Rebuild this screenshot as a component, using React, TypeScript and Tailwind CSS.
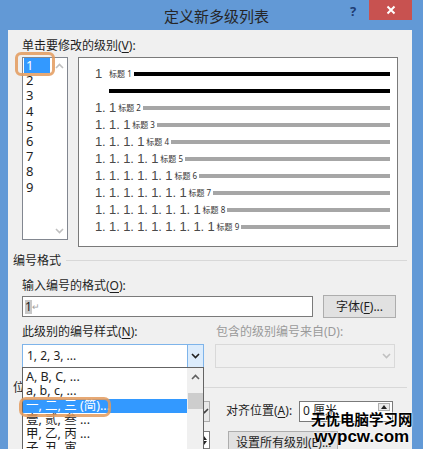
import type { ReactNode } from "react"

const levels = [1, 2, 3, 4, 5, 6, 7, 8, 9]

const styles = [
  "A, B, C, ...",
  "a, b, c, ...",
  "一, 二, 三 (简)...",
  "壹, 贰, 叁 ...",
  "甲, 乙, 丙 ...",
  "子, 丑, 寅 ...",
]

function Chevron({ up, color = "#606060" }: { up?: boolean; color?: string }) {
  return (
    <svg width="9" height="6" viewBox="0 0 9 6">
      <polyline
        points={up ? "1,5 4.5,1.5 8,5" : "1,1 4.5,4.5 8,1"}
        fill="none"
        stroke={color}
        strokeWidth="1.6"
      />
    </svg>
  )
}

function Key({ children }: { children: ReactNode }) {
  return <span className="underline underline-offset-2">{children}</span>
}

function PreviewRow({ level }: { level: number }) {
  const num = Array.from({ length: level }, () => "1").join(". ")
  return (
    <div className="flex h-[17px] items-center">
      <span className="text-[13px] leading-none tracking-[-0.01em] text-[#4a4a4a] font-['Liberation_Sans',sans-serif]">
        {num}
      </span>
      <span className={`${level === 1 ? "ml-[7px]" : "ml-[2px]"} text-[8px] leading-none text-[#333] whitespace-nowrap`}>
        标题 {level}
      </span>
      <div className={`ml-[2px] h-[4px] flex-1 ${level === 1 ? "bg-black" : "bg-[#a6a6a6]"}`} />
    </div>
  )
}

export default function App() {
  return (
    <div className="relative flex h-[449px] w-[423px] flex-col overflow-hidden bg-[#6299d6] text-[12px] text-[#1e1e1e] font-['Noto_Sans','Noto_Sans_CJK_SC',sans-serif]">
      {/* title bar */}
      <div className="relative flex h-[30px] shrink-0 items-center justify-center">
        <span className="pl-[10px] text-[15px] leading-none text-[#262626] font-['Noto_Sans_CJK_SC',sans-serif]">
          定义新多级列表
        </span>
        <span className="absolute left-[350px] top-[2px] text-[13px] font-bold text-[#1f3d73]">?</span>
        <div className="absolute left-[369px] top-0 flex h-[20px] w-[43px] items-center justify-center bg-[#c85250]">
          <svg width="10" height="10" viewBox="0 0 10 10">
            <path d="M1.5 1.5 L8.5 8.5 M8.5 1.5 L1.5 8.5" stroke="#fff" strokeWidth="2" />
          </svg>
        </div>
      </div>

      {/* dialog body */}
      <div className="relative ml-[8px] mr-[11px] flex-1 bg-[#f0f0f0]">
        <div className="pl-[14px] pt-[8px] leading-[15px]">
          单击要修改的级别(<Key>V</Key>):
        </div>

        <div className="mt-[4px] flex items-start gap-[10px] pl-[14px]">
          {/* level list */}
          <div className="flex h-[183px] w-[46px] border border-[#828790] bg-white">
            <div className="w-[28px]">
              {levels.map((n) => (
                <div
                  key={n}
                  className={`mx-[1px] h-[15.2px] pl-[2px] text-[13px] leading-[15px] ${
                    n === 1 ? "bg-[#3399ff] text-white" : "text-[#1e1e1e]"
                  }`}
                >
                  {n}
                </div>
              ))}
            </div>
            <div className="flex w-[16px] flex-col items-center justify-between py-[5px]">
              <Chevron up color="#c0c0c0" />
              <Chevron color="#c0c0c0" />
            </div>
          </div>

          {/* preview */}
          <div className="h-[190px] w-[320px] border border-[#7a7a7a] bg-white pl-[16px] pr-[7px] pt-[7px]">
            <PreviewRow level={1} />
            <div className="flex h-[17px] items-center pl-[14px]">
              <div className="h-[4px] flex-1 bg-black" />
            </div>
            {levels.slice(1).map((n) => (
              <PreviewRow key={n} level={n} />
            ))}
          </div>
        </div>

        {/* number format group */}
        <div className="mt-[6px] flex items-center pl-[5px] leading-[15px]">
          <span>编号格式</span>
          <div className="ml-[5px] mr-[5px] h-px flex-1 bg-[#d8d8d8]" />
        </div>

        <div className="mt-[10px] pl-[14px] leading-[15px]">
          输入编号的格式(<Key>O</Key>):
        </div>

        <div className="mt-[2px] flex h-[23px] items-center pl-[14px]">
          <div className="flex h-[21px] w-[291px] items-center border border-[#7a7a7a] bg-white pl-[2px]">
            <span className="bg-[#c8c8c8] text-[12px] leading-[14px]">1</span>
            <span className="text-[9px] leading-none text-[#a0a0a0]">↵</span>
          </div>
          <button className="ml-[10px] h-[23px] w-[73px] border border-[#adadad] bg-[#e1e1e1] text-[12px] leading-none">
            字体(<Key>F</Key>)...
          </button>
        </div>

        <div className="mt-[6px] flex leading-[15px]">
          <span className="w-[208px] pl-[14px]">
            此级别的编号样式(<Key>N</Key>):
          </span>
          <span className="text-[#9a9a9a]">包含的级别编号来自(D):</span>
        </div>

        <div className="mt-[5px] flex items-center pl-[14px]">
          <div className="flex h-[24px] w-[182px] items-center justify-between border border-[#7eb4ea] bg-white">
            <span className="pl-[4px] leading-none">1, 2, 3, ...</span>
            <div className="flex h-full w-[16px] items-center justify-center border-l border-[#7eb4ea] bg-[#dcecfc]">
              <Chevron color="#202020" />
            </div>
          </div>
          <div className="ml-[11px] flex h-[24px] w-[180px] items-center justify-end border border-[#d9d9d9] bg-[#f0f0f0]">
            <div className="flex h-full w-[16px] items-center justify-center">
              <Chevron color="#c0c0c0" />
            </div>
          </div>
        </div>

        {/* position group */}
        <div className="mt-[12px] flex items-center pl-[5px] leading-[15px]">
          <span>位置</span>
          <div className="ml-[5px] mr-[5px] h-px flex-1 bg-[#d8d8d8]" />
        </div>

        <div className="mt-[5px] flex h-[22px] items-center pl-[14px]">
          <div className="flex h-[21px] w-[188px] items-center justify-end border border-[#adadad] bg-[#e8e8e8]">
            <div className="flex w-[10px] justify-center">
              <Chevron color="#404040" />
            </div>
          </div>
          <span className="ml-[16px] leading-none">
            对齐位置(<Key>A</Key>):
          </span>
          <div className="ml-[7px] flex h-[21px] w-[94px] items-start justify-between border border-[#7a7a7a] bg-white">
            <span className="pl-[3px] pt-[3px] leading-none">0 厘米</span>
            <div className="mr-[2px] mt-[1px] flex h-[8px] w-[12px] items-center justify-center border border-[#adadad] bg-[#eaeaea]">
              <svg width="6" height="4" viewBox="0 0 6 4">
                <polygon points="0,4 3,0 6,4" fill="#202020" />
              </svg>
            </div>
          </div>
        </div>

        <div className="mt-[9px] flex items-start pl-[14px]">
          <div className="flex h-[18px] w-[188px] items-center justify-end border border-[#7a7a7a] bg-white">
            <div className="flex h-full w-[10px] flex-col items-center justify-center gap-[1px]">
              <svg width="6" height="4" viewBox="0 0 6 4">
                <polygon points="0,4 3,0 6,4" fill="#202020" />
              </svg>
              <svg width="6" height="4" viewBox="0 0 6 4">
                <polygon points="0,0 6,0 3,4" fill="#202020" />
              </svg>
            </div>
          </div>
          <button className="ml-[18px] h-[23px] w-[110px] border border-[#adadad] bg-[#e1e1e1] text-left pl-[7px] text-[12px] leading-none">
            设置所有级别(<Key>E</Key>)...
          </button>
        </div>

        {/* open dropdown of number styles */}
        <div className="absolute left-[14px] top-[337px] flex h-[120px] w-[182px] border border-[#646464] bg-white">
          <div className="flex-1 pt-[2px]">
            {styles.map((s, i) => (
              <div
                key={s}
                className={`h-[14.3px] pl-[3px] text-[12.5px] leading-[14px] whitespace-nowrap ${
                  i === 2 ? "bg-[#3399ff] text-white" : ""
                }`}
              >
                {s}
              </div>
            ))}
          </div>
          <div className="flex w-[16px] flex-col items-center bg-[#f0f0f0]">
            <div className="flex h-[17px] items-center">
              <Chevron up color="#606060" />
            </div>
            <div className="mt-[8px] h-[16px] w-[15px] bg-[#cdcdcd]" />
          </div>
        </div>

        {/* callout rings */}
        <div className="absolute left-[7px] top-[22px] h-[24px] w-[40px] rounded-[6px] border-[3px] border-[#e39a5c]/85" />
        <div className="absolute left-[11px] top-[367px] h-[20px] w-[92px] rounded-[7px] border-[3px] border-[#e39a5c]/85" />

        {/* site watermark */}
        <div className="absolute left-[303px] top-[383px] flex flex-col items-center whitespace-nowrap leading-none font-['Liberation_Sans','Noto_Sans_CJK_SC',sans-serif] [text-shadow:0_0_2px_#fff,0_0_2px_#fff]">
          <span className="text-[14.5px] font-bold text-black">无忧电脑学习网</span>
          <span className="text-[17px] font-bold text-black">wypcw.com</span>
        </div>
      </div>
    </div>
  )
}
